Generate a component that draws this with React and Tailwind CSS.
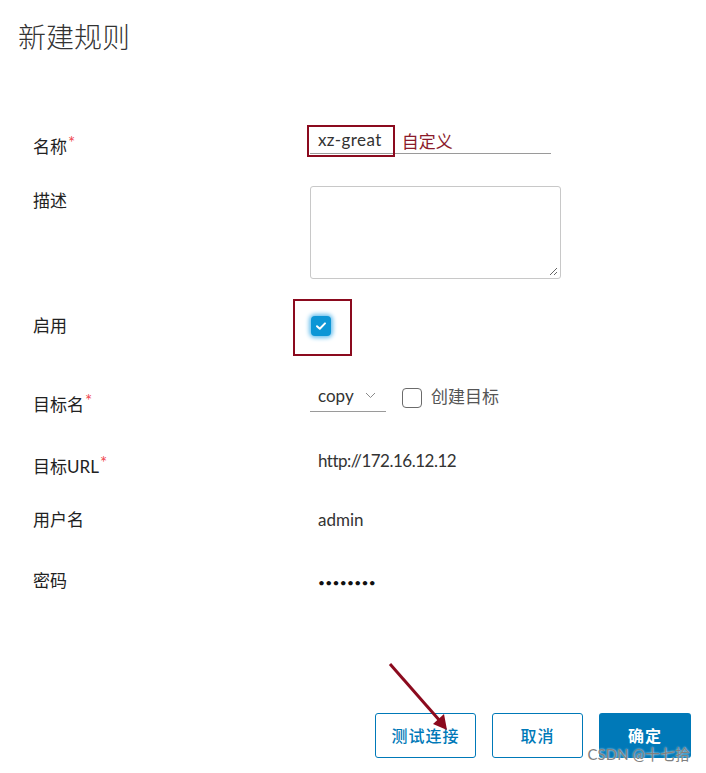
const cjk = { fontFamily: 'Lato, "Noto Sans CJK SC", sans-serif' };

function Label({ children, required, pt }) {
  return (
    <div className={`w-[310px] shrink-0 pl-[33px] text-[17px] leading-6 text-[#222] ${pt}`}>
      {children}
      {required && <span className="ml-px text-[#f0474f] text-[17px] leading-4 align-top">*</span>}
    </div>
  );
}

function Row({ className, children }) {
  return <div className={`flex ${className}`}>{children}</div>;
}

export default function App() {
  return (
    <div className="relative h-[773px] w-[706px] bg-white text-[#333]" style={cjk}>
      <h1 className="pl-[18px] pt-[19px] text-[28px] leading-9 font-light text-[#333]">新建规则</h1>

      <Row className="mt-[70px] h-10">
        <Label required pt="pt-[10px]">名称</Label>
        <div className="relative h-[29px] w-[241px] border-b border-[#9a9a9a]">
          <div className="absolute left-[-3px] top-0 h-[32px] w-[88px] border-2 border-[#8b0a1e]" />
          <div className="flex items-center h-[29px] pl-2 text-[17px] leading-6">
            <span className="text-[#333] tracking-[0.4px]">xz-great</span>
            <span className="ml-[20px] mt-1 text-[#8b1a2b]">自定义</span>
          </div>
        </div>
      </Row>

      <Row className="mt-[21px]">
        <Label pt="pt-[3px]">描述</Label>
        <div className="relative h-[93px] w-[251px] rounded-[3px] border border-[#c8c8c8]">
          <svg className="absolute right-[2px] bottom-[2px]" width="9" height="9" viewBox="0 0 9 9">
            <path d="M8 1L1 8M8 5L5 8" stroke="#666" strokeWidth="1" />
          </svg>
        </div>
      </Row>

      <Row className="mt-[20px] h-[57px]">
        <Label pt="pt-[15px]">启用</Label>
        <div className="relative w-[100px]">
          <div className="absolute left-[-17px] top-0 h-[57px] w-[59px] border-2 border-[#8b0a1e]" />
          <div className="ml-px mt-[17px] flex h-5 w-5 items-center justify-center rounded-[4px] bg-[#0c96d6] shadow-[0_0_4px_2px_#6cc1ee]">
            <svg width="12" height="10" viewBox="0 0 12 10">
              <path d="M2 5.2L4.8 7.8L10 2.4" stroke="#fff" strokeWidth="2" fill="none" strokeLinecap="round" strokeLinejoin="round" />
            </svg>
          </div>
        </div>
      </Row>

      <Row className="mt-[28px]">
        <Label required pt="pt-[9px]">目标名</Label>
        <div className="flex items-start">
          <div className="flex h-[28px] w-[76px] items-center border-b border-[#9a9a9a] pl-2 text-[17px] leading-6">
            <span className="-mt-1">copy</span>
            <svg className="ml-[11px] -mt-1" width="11" height="7" viewBox="0 0 11 7">
              <path d="M1 1L5.5 5.5L10 1" stroke="#8a8a8a" strokeWidth="1" fill="none" />
            </svg>
          </div>
          <div className="ml-4 mt-[4px] h-5 w-5 rounded-[4px] border border-[#6b6b6b]" />
          <span className="ml-[9px] mt-[1px] text-[17px] leading-6 text-[#555]">创建目标</span>
        </div>
      </Row>

      <Row className="mt-[32px]">
        <Label required pt="pt-[6px]">目标URL</Label>
        <div className="pl-2 text-[17px] leading-6 tracking-[-0.5px]">http://172.16.12.12</div>
      </Row>

      <Row className="mt-[29px]">
        <Label>用户名</Label>
        <div className="pl-2 text-[17px] leading-6">admin</div>
      </Row>

      <Row className="mt-[37px]">
        <Label>密码</Label>
        <div className="pl-2 pt-[2px] text-[12px] leading-6 tracking-[0.3px] text-[#111]">••••••••</div>
      </Row>

      <div className="mt-[118px] flex justify-end gap-4 pr-[15px]">
        <button className="h-[45px] w-[101px] rounded-[3px] border border-[#0079b8] text-[16px] tracking-[1px] font-medium text-[#0079b8]">测试连接</button>
        <button className="h-[45px] w-[91px] rounded-[3px] border border-[#0079b8] text-[16px] tracking-[1px] font-medium text-[#0079b8]">取消</button>
        <button className="h-[45px] w-[92px] rounded-[3px] bg-[#0079b8] text-[16px] tracking-[1px] font-bold text-white">确定</button>
      </div>

      <svg className="pointer-events-none absolute left-0 top-0" width="706" height="773">
        <line x1="390" y1="664" x2="440" y2="721" stroke="#8b0a1e" strokeWidth="3" />
        <polygon points="447,730 433,724 444,714" fill="#8b0a1e" />
      </svg>

      <div className="pointer-events-none absolute right-[16px] top-[746px] text-[15px] leading-4 text-[#808080] [text-shadow:0_0_2px_#fff]">
        CSDN @十七拾
      </div>
    </div>
  );
}
